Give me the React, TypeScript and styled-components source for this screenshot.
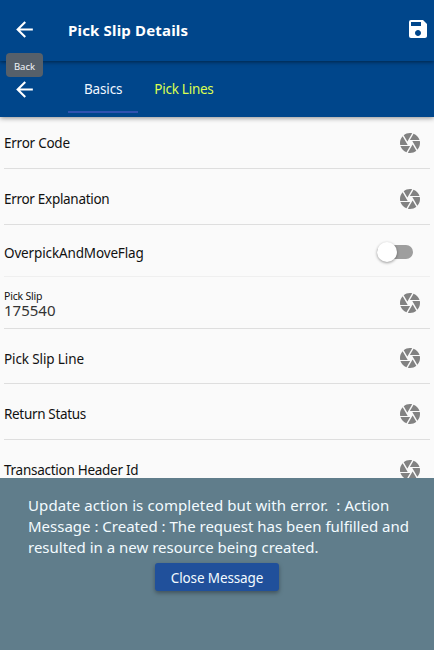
import React from "react";
import styled, { createGlobalStyle } from "styled-components";
import { MdArrowBack, MdSave } from "react-icons/md";

const GlobalStyle = createGlobalStyle`
  * { box-sizing: border-box; }
  html, body { margin: 0; padding: 0; }
  body { font-family: "Noto Sans", "Open Sans", sans-serif; overflow: hidden; }
  svg { display: block; flex: none; }
`;

const Screen = styled.div`
  position: relative;
  display: flex;
  flex-direction: column;
  width: 100%;
  height: 650px;
  overflow: hidden;
  background: #fafafa;
  color: #111;
`;

const TitleBar = styled.header`
  position: relative;
  z-index: 2;
  display: flex;
  align-items: center;
  flex: none;
  height: 61px;
  padding: 0 4px 3px 12px;
  background: #00468b;
  color: #fff;
  box-shadow: 0 1px 4px rgba(0, 0, 0, 0.5);
`;

const IconButton = styled.button`
  display: flex;
  padding: 0;
  border: 0;
  background: none;
  color: inherit;
`;

const Title = styled.h1`
  flex: 1;
  margin: 2px 0 0 31px;
  font-size: 15px;
  line-height: 20px;
  font-weight: 700;
  letter-spacing: 0.17px;
`;

const Tooltip = styled.div`
  position: absolute;
  top: 53px;
  left: 6px;
  display: flex;
  align-items: center;
  justify-content: center;
  width: 37px;
  height: 24px;
  padding-top: 3px;
  border-radius: 4px;
  background: #56606a;
  color: #f2f5f8;
  font-size: 9.5px;
  line-height: 12px;
`;

const TabBar = styled.nav`
  position: relative;
  z-index: 1;
  display: flex;
  align-items: center;
  flex: none;
  height: 56px;
  padding-left: 12px;
  background: #00468b;
  color: #fff;
  box-shadow: 0 1px 5px rgba(0, 0, 0, 0.45);
`;

const Tabs = styled.div`
  display: flex;
  align-self: stretch;
  margin: 0 0 4px 31px;
`;

const Tab = styled.div<{ $active?: boolean; $spacing: number }>`
  padding: 18px 16px 0;
  border-bottom: 2px solid ${(p) => (p.$active ? "#3052b0" : "transparent")};
  color: ${(p) => (p.$active ? "#f0f7ff" : "#dcff50")};
  font-size: 13.5px;
  line-height: 20px;
  letter-spacing: ${(p) => p.$spacing}px;
  white-space: nowrap;
`;

const Fields = styled.main`
  flex: 1;
  min-height: 0;
  overflow: hidden;
  padding: 0 4px;
`;

const Row = styled.div<{ $height: number; $faint?: boolean; $bottom?: number }>`
  display: flex;
  align-items: flex-end;
  justify-content: space-between;
  height: ${(p) => p.$height}px;
  padding: 0 8px ${(p) => p.$bottom ?? 13}px 0;
  border-bottom: 1px solid ${(p) => (p.$faint ? "#efefef" : "#dedede")};
`;

const Label = styled.span<{ $spacing: number; $drop?: number }>`
  margin-bottom: ${(p) => -(p.$drop ?? 0)}px;
  font-size: 13.5px;
  line-height: 24px;
  letter-spacing: ${(p) => p.$spacing}px;
  white-space: nowrap;
`;

const Filled = styled.div`
  display: flex;
  flex-direction: column;
  margin-bottom: -2px;
`;

const SmallLabel = styled.span`
  font-size: 10.5px;
  line-height: 13px;
  letter-spacing: -0.2px;
`;

const Value = styled.span`
  font-size: 15px;
  line-height: 14px;
  color: #333;
`;

const Switch = styled.div`
  display: flex;
  align-items: center;
  width: 36px;
  height: 14px;
  margin: 0 9px 5px 0;
  border-radius: 7px;
  background: #9e9e9e;
`;

const Thumb = styled.div`
  width: 20px;
  height: 20px;
  border-radius: 50%;
  background: #fff;
  box-shadow: 0 1px 3px rgba(0, 0, 0, 0.4);
`;

const Message = styled.section`
  position: absolute;
  z-index: 3;
  right: 0;
  bottom: 0;
  left: 0;
  display: flex;
  flex-direction: column;
  align-items: center;
  height: 172px;
  padding-top: 17px;
  background: #607d8b;
  color: #f3fbff;
`;

const MessageText = styled.p`
  align-self: stretch;
  margin: 0 0 5px 28px;
`;

const Line = styled.span<{ $spacing: number }>`
  display: block;
  font-size: 15px;
  line-height: 21px;
  letter-spacing: ${(p) => p.$spacing}px;
  white-space: pre;
`;

const CloseButton = styled.button`
  width: 124px;
  height: 28px;
  padding: 2px 0 0;
  border: 0;
  border-radius: 3px;
  background: #20509b;
  color: #f3fbff;
  font: 13.5px/20px "Noto Sans", sans-serif;
  letter-spacing: -0.12px;
  white-space: nowrap;
  box-shadow: 0 2px 4px rgba(0, 0, 0, 0.35);
`;

const ApertureSvg = styled.svg`
  width: 24px;
  height: 24px;
  fill: #828282;
`;

function Aperture() {
  return (
    <ApertureSvg viewBox="0 0 24 24">
      <path d="M9.4 10.5l4.77-8.26C13.47 2.09 12.75 2 12 2c-2.4 0-4.6.85-6.32 2.25l3.66 6.35.06-.1zM21.54 9c-.92-2.92-3.15-5.26-6-6.34L11.88 9h9.66zm.26 1h-7.49l.29.5 4.76 8.25C21 16.97 22 14.61 22 12c0-.69-.07-1.35-.2-2zM8.54 12l-3.9-6.75C3.01 7.03 2 9.39 2 12c0 .69.07 1.35.2 2h7.49l-1.15-2zm-6.08 3c.92 2.92 3.15 5.26 6 6.34L12.12 15H2.46zm11.27 0l-3.9 6.76c.7.15 1.42.24 2.17.24 2.4 0 4.6-.85 6.32-2.25l-3.66-6.35-.93 1.6z" />
    </ApertureSvg>
  );
}

export default function App() {
  return (
    <Screen>
      <GlobalStyle />
      <TitleBar>
        <IconButton aria-label="Back"><MdArrowBack size={25} /></IconButton>
        <Title>Pick Slip Details</Title>
        <IconButton aria-label="Save"><MdSave size={24} /></IconButton>
        <Tooltip>Back</Tooltip>
      </TitleBar>
      <TabBar>
        <IconButton aria-label="Back"><MdArrowBack size={25} /></IconButton>
        <Tabs>
          <Tab $active $spacing={-0.15}>Basics</Tab>
          <Tab $spacing={-0.27}>Pick Lines</Tab>
        </Tabs>
      </TabBar>
      <Fields>
        <Row $height={52}><Label $spacing={-0.25}>Error Code</Label><Aperture /></Row>
        <Row $height={56}><Label $spacing={-0.3}>Error Explanation</Label><Aperture /></Row>
        <Row $height={52} $faint $bottom={12}>
          <Label $spacing={-0.14} $drop={1}>OverpickAndMoveFlag</Label>
          <Switch><Thumb /></Switch>
        </Row>
        <Row $height={52}>
          <Filled>
            <SmallLabel>Pick Slip</SmallLabel>
            <Value>175540</Value>
          </Filled>
          <Aperture />
        </Row>
        <Row $height={55}><Label $spacing={-0.12} $drop={1}>Pick Slip Line</Label><Aperture /></Row>
        <Row $height={56}><Label $spacing={-0.33}>Return Status</Label><Aperture /></Row>
        <Row $height={56}><Label $spacing={-0.27}>Transaction Header Id</Label><Aperture /></Row>
      </Fields>
      <Message>
        <MessageText>
          <Line $spacing={0.1}>{"Update action is completed but with error.  : Action"}</Line>
          <Line $spacing={0}>Message : Created : The request has been fulfilled and</Line>
          <Line $spacing={0}>resulted in a new resource being created.</Line>
        </MessageText>
        <CloseButton>Close Message</CloseButton>
      </Message>
    </Screen>
  );
}
